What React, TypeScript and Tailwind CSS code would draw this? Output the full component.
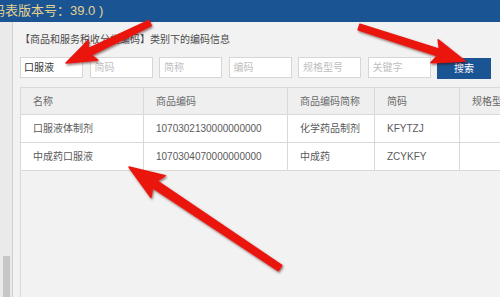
import React from "react";

type Pt = [number, number];

function arrowPoints(tail: Pt, tip: Pt, shaft: number, headLen: number, headW: number): string {
  const dx = tip[0] - tail[0];
  const dy = tip[1] - tail[1];
  const len = Math.hypot(dx, dy);
  const ux = dx / len;
  const uy = dy / len;
  const nx = -uy;
  const ny = ux;
  const bx = tip[0] - ux * headLen;
  const by = tip[1] - uy * headLen;
  const pts: Pt[] = [
    [tail[0] + nx * shaft * 0.4, tail[1] + ny * shaft * 0.4],
    [bx + nx * shaft / 2, by + ny * shaft / 2],
    [bx + nx * headW / 2 - ux * 4, by + ny * headW / 2 - uy * 4],
    [tip[0], tip[1]],
    [bx - nx * headW / 2 - ux * 4, by - ny * headW / 2 - uy * 4],
    [bx - nx * shaft / 2, by - ny * shaft / 2],
    [tail[0] - nx * shaft * 0.4, tail[1] - ny * shaft * 0.4],
  ];
  return pts.map((p) => `${p[0].toFixed(1)},${p[1].toFixed(1)}`).join(" ");
}

const arrows: { tail: Pt; tip: Pt; shaft: number; hl: number; hw: number }[] = [
  { tail: [150, 23], tip: [66, 63], shaft: 7, hl: 26, hw: 22 },
  { tail: [359, 27], tip: [465, 61], shaft: 7, hl: 28, hw: 24 },
  { tail: [280, 268], tip: [129, 167], shaft: 8, hl: 31, hw: 26 },
];

const font = { fontFamily: '"Liberation Sans", "Noto Sans CJK SC", sans-serif' };

const cols = ["w-[123px]", "w-[144px]", "w-[87px]", "w-[85px]", "w-[80px]"];

function Row({ cells, header }: { cells: string[]; header?: boolean }) {
  return (
    <div
      className={`flex border-b border-[#d9d9d9] ${header ? "h-[27px] bg-[#efefef] text-[#6a6a6a]" : "h-[28px] bg-white text-[#5a5a5a]"}`}
    >
      {cells.map((c, i) => (
        <div
          key={i}
          className={`${cols[i]} shrink-0 flex items-center pl-[12px] whitespace-nowrap ${i < 4 ? "border-r border-[#d9d9d9]" : ""}`}
        >
          {c}
        </div>
      ))}
    </div>
  );
}

export default function App() {
  const placeholders = ["简码", "简称", "编码", "规格型号", "关键字"];
  return (
    <div className="relative w-[500px] h-[297px] overflow-hidden bg-[#f2f2f2]" style={font}>
      <div className="h-[22px] bg-[#1b5493] flex items-center overflow-hidden">
        <span className="ml-[-8px] text-[13px] text-[#e3d28f] whitespace-nowrap">码表版本号：39.0 )</span>
      </div>
      <div className="flex h-[275px]">
        <div className="w-[13px] shrink-0 bg-[#eaeaea] border-r border-[#cfcfcf] flex flex-col justify-end pl-[3px]">
          <div className="h-[41px] w-[7px] bg-[#c6c6c6]" />
        </div>
        <div className="flex-1 min-w-0 overflow-hidden pl-[7px] flex flex-col">
          <div className="mt-[11px] h-[14px] leading-[14px] text-[10px] text-[#4a4a4a] whitespace-nowrap">
            【商品和服务税收分类编码】类别下的编码信息
          </div>
          <div className="mt-[10px] flex gap-[6.5px] items-start">
            <div className="w-[63px] shrink-0 h-[21px] bg-white border border-[#d6d6d6] flex items-center pl-[3px] text-[10px] text-[#333]">
              口服液
            </div>
            {placeholders.map((p) => (
              <div
                key={p}
                className="w-[63px] shrink-0 h-[21px] bg-white border border-[#d6d6d6] flex items-center pl-[4px] text-[10px] text-[#c0c0c0]"
              >
                {p}
              </div>
            ))}
            <div className="w-[54px] shrink-0 h-[21px] mt-[1px] bg-[#1b5493] flex items-center justify-center text-[10px] text-white">
              搜索
            </div>
          </div>
          <div className="mt-[8px] flex-1 border-l border-t border-[#d9d9d9] text-[10px]">
            <Row header cells={["名称", "商品编码", "商品编码简称", "简码", "规格型号"]} />
            <Row cells={["口服液体制剂", "1070302130000000000", "化学药品制剂", "KFYTZJ", ""]} />
            <Row cells={["中成药口服液", "1070304070000000000", "中成药", "ZCYKFY", ""]} />
          </div>
        </div>
      </div>
      <svg className="absolute inset-0 pointer-events-none" width="500" height="297" viewBox="0 0 500 297">
        <defs>
          <filter id="sh" x="-20%" y="-20%" width="140%" height="140%">
            <feDropShadow dx="1" dy="1.5" stdDeviation="1.2" floodColor="#400000" floodOpacity="0.55" />
          </filter>
        </defs>
        {arrows.map((a, i) => (
          <polygon
            key={i}
            points={arrowPoints(a.tail, a.tip, a.shaft, a.hl, a.hw)}
            fill="#ea1410"
            stroke="#ea1410"
            strokeWidth="1.5"
            strokeLinejoin="round"
            filter="url(#sh)"
          />
        ))}
      </svg>
    </div>
  );
}
